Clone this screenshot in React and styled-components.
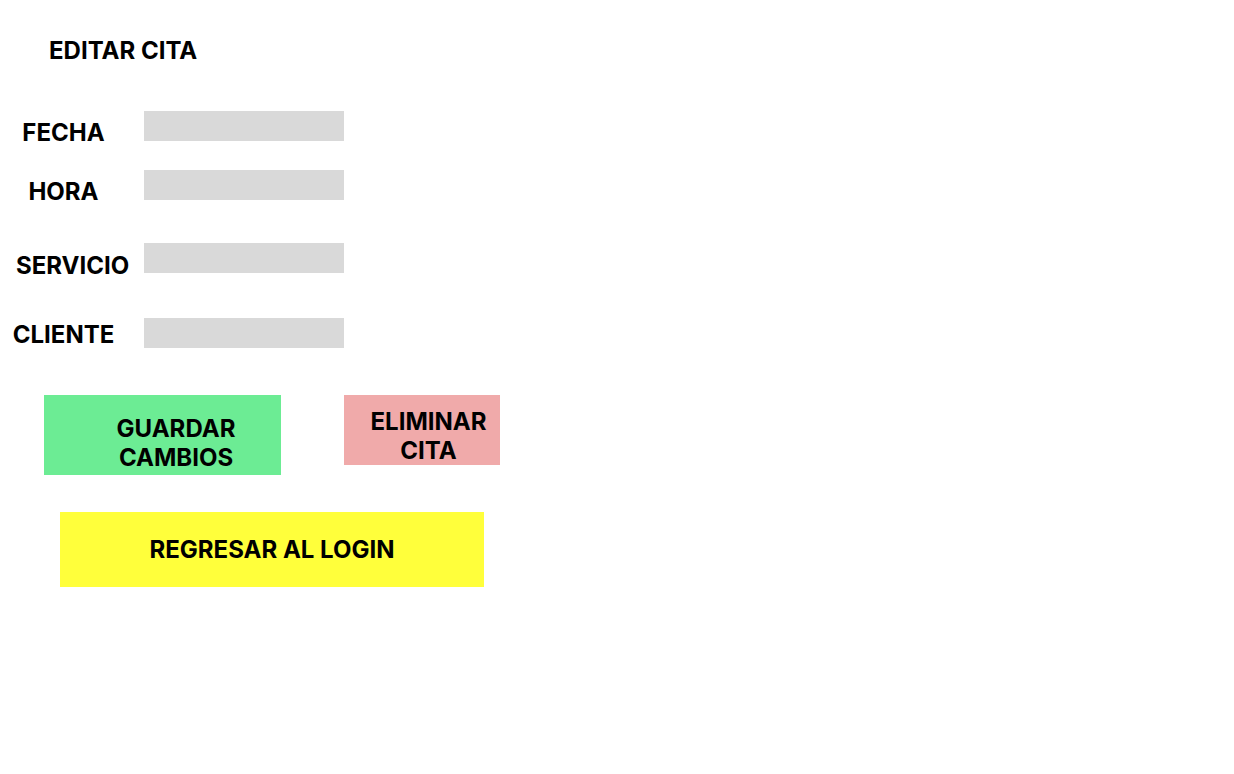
import styled, { createGlobalStyle } from "styled-components";

const GlobalStyle = createGlobalStyle`
  body {
    margin: 0;
    background: #ffffff;
    font-family: Inter, "Liberation Sans", sans-serif;
    color: #000000;
  }
`;

const Page = styled.div`
  display: flex;
  flex-direction: column;
  align-items: flex-start;
  min-height: 774px;
`;

const Title = styled.h1`
  margin: 36px 0 0 49px;
  font-size: 24px;
  line-height: 29px;
  font-weight: 700;
`;

const Form = styled.div`
  display: flex;
  flex-direction: column;
  margin-top: 46px;
`;

const Row = styled.div`
  display: flex;
  align-items: flex-start;
  height: 30px;
  margin-top: ${(p) => p.$top || 0}px;
`;

const Label = styled.label`
  width: 127px;
  margin-right: 17px;
  margin-top: ${(p) => p.$dy}px;
  padding-left: ${(p) => p.$dx || 0}px;
  box-sizing: border-box;
  text-align: center;
  font-size: 24px;
  line-height: 29px;
  font-weight: 700;
  white-space: nowrap;
`;

const Input = styled.input`
  width: 200px;
  height: 30px;
  box-sizing: border-box;
  border: none;
  outline: none;
  background: #d9d9d9;
  padding: 0 8px;
  font-family: inherit;
`;

const Actions = styled.div`
  display: flex;
  align-items: flex-start;
  margin-top: 47px;
  margin-left: 44px;
  gap: 63px;
`;

const Button = styled.button`
  display: flex;
  justify-content: center;
  align-items: ${(p) => (p.$center ? "center" : "flex-start")};
  box-sizing: border-box;
  width: ${(p) => p.$w}px;
  height: ${(p) => p.$h}px;
  padding: ${(p) => p.$pt || 0}px 0 0 ${(p) => p.$pl || 0}px;
  border: none;
  background: ${(p) => p.$bg};
  font-family: inherit;
  font-size: 24px;
  line-height: 29px;
  font-weight: 700;
  color: #000000;
  text-align: center;
  white-space: nowrap;
  cursor: pointer;
`;

const BackButton = styled(Button)`
  margin: 37px 0 0 60px;
`;

const fields = [
  { label: "FECHA", top: 0, dy: 7 },
  { label: "HORA", top: 29, dy: 7 },
  { label: "SERVICIO", top: 43, dy: 8, dx: 16 },
  { label: "CLIENTE", top: 45, dy: 2 },
];

export default function App() {
  return (
    <Page>
      <GlobalStyle />
      <Title>EDITAR CITA</Title>
      <Form>
        {fields.map((f) => (
          <Row key={f.label} $top={f.top}>
            <Label $dy={f.dy} $dx={f.dx}>{f.label}</Label>
            <Input type="text" />
          </Row>
        ))}
      </Form>
      <Actions>
        <Button $w={237} $h={80} $pt={19} $pl={27} $bg="#6cec94">
          GUARDAR
          <br />
          CAMBIOS
        </Button>
        <Button $w={156} $h={70} $pt={12} $pl={13} $bg="#f0aaaa">
          ELIMINAR
          <br />
          CITA
        </Button>
      </Actions>
      <BackButton $w={424} $h={75} $center $bg="#ffff3b">
        REGRESAR AL LOGIN
      </BackButton>
    </Page>
  );
}
